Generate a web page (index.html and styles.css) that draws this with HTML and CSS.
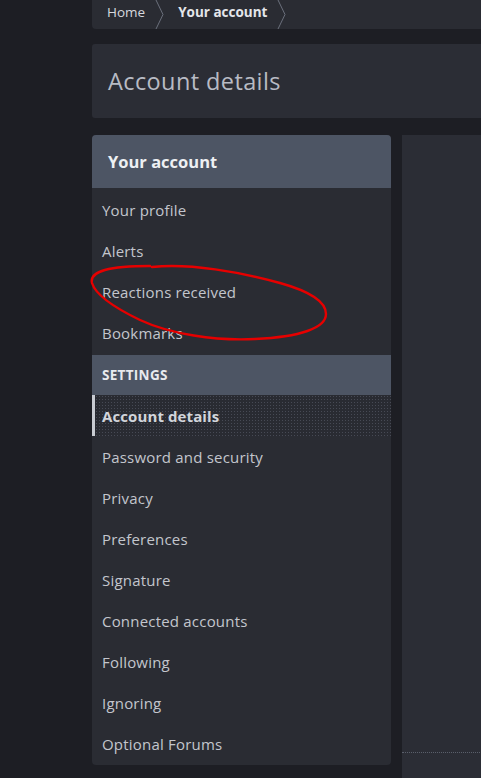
FILE: index.html
```html
<!DOCTYPE html>
<html lang="en">
<head>
<meta charset="utf-8">
<title>Account details</title>
<link rel="stylesheet" href="styles.css">
</head>
<body>
<div class="page">
  <nav class="crumbs">
    <a class="crumb">Home</a>
    <svg class="sep" width="10" height="29" viewBox="0 0 10 29"><path d="M1 0 L8 14.5 L1 29" fill="none" stroke="#6b707c" stroke-width="1"/></svg>
    <a class="crumb current">Your account</a>
    <svg class="sep" width="10" height="29" viewBox="0 0 10 29"><path d="M1 0 L8 14.5 L1 29" fill="none" stroke="#6b707c" stroke-width="1"/></svg>
  </nav>
  <header class="title-block">
    <h1>Account details</h1>
  </header>
  <div class="columns">
    <aside class="sidebar">
      <h2 class="side-head">Your account</h2>
      <ul class="side-list first">
        <li>Your profile</li>
        <li>Alerts</li>
        <li>Reactions received</li>
        <li>Bookmarks</li>
      </ul>
      <h3 class="side-sub">Settings</h3>
      <ul class="side-list">
        <li class="active">Account details</li>
        <li>Password and security</li>
        <li>Privacy</li>
        <li>Preferences</li>
        <li>Signature</li>
        <li>Connected accounts</li>
        <li>Following</li>
        <li>Ignoring</li>
        <li>Optional Forums</li>
      </ul>
    </aside>
    <main class="main">
      <div class="main-body"></div>
      <div class="main-foot"></div>
    </main>
  </div>
</div>
<svg class="scribble" width="481" height="778" viewBox="0 0 481 778">
  <path d="M152 267 C 190 263, 240 272, 280 283 C 305 290, 326 300, 326 314 C 326 328, 300 337, 255 339 C 215 341, 170 334, 140 320 C 115 308, 96 296, 92 283 C 89 271, 110 266, 150 266"
        fill="none" stroke="#e60000" stroke-width="2.4" stroke-linecap="round"/>
</svg>
</body>
</html>
```
FILE: styles.css
```css
* { box-sizing: border-box; }
html, body { margin: 0; padding: 0; }
body {
  background: #1d1e24;
  font-family: "Open Sans", "DejaVu Sans", sans-serif;
  color: #c3c6cd;
  width: 481px;
  height: 778px;
  overflow: hidden;
  position: relative;
}
.page {
  margin-left: 92px;
  width: 520px;
}
.crumbs {
  height: 29px;
  background: #2a2c33;
  border-radius: 0 0 4px 4px;
  display: flex;
  align-items: center;
  padding-left: 15px;
}
.crumb {
  font-size: 13.5px;
  color: #d6d8de;
  padding-bottom: 5px;
}
.crumb.current {
  font-weight: 700;
  color: #e4e6ea;
}
.sep { margin: 0 13px 0 10px; }
.title-block {
  margin-top: 15px;
  height: 74px;
  background: #2b2d35;
  border-radius: 3px;
  display: flex;
  align-items: center;
  padding-left: 16px;
}
.title-block h1 {
  margin: 0;
  font-size: 23.5px;
  font-weight: 400;
  color: #b8bbc4;
  letter-spacing: 0.4px;
  padding-bottom: 1px;
}
.columns {
  margin-top: 17px;
  display: flex;
  gap: 11px;
  align-items: flex-start;
}
.sidebar {
  width: 299px;
  flex: none;
  background: #2a2c33;
  border-radius: 4px;
  overflow: hidden;
  padding-bottom: 1px;
}
.side-head {
  margin: 0;
  height: 53px;
  background: #4d5564;
  display: flex;
  align-items: center;
  padding-left: 16px;
  font-size: 16.5px;
  font-weight: 700;
  color: #eef0f3;
}
.side-sub {
  margin: 0;
  height: 40px;
  background: #4d5564;
  display: flex;
  align-items: center;
  padding-left: 10px;
  font-size: 13.5px;
  font-weight: 700;
  letter-spacing: 0.3px;
  text-transform: uppercase;
  color: #e8eaee;
  padding-bottom: 1px;
}
.side-list {
  list-style: none;
  margin: 0;
  padding: 0;
}
.side-list.first { padding-top: 1px; padding-bottom: 2px; }
.side-list li {
  height: 41px;
  display: flex;
  align-items: center;
  padding-left: 10px;
  font-size: 15px;
  letter-spacing: 0.2px;
  color: #c3c6cd;
}
.side-list li.active {
  font-weight: 700;
  letter-spacing: 0.1px;
  color: #d2d5db;
  border-left: 3px solid #c9ccd3;
  padding-left: 7px;
  background-color: #292b32;
  background-image: radial-gradient(circle, #474a55 0.7px, transparent 0.9px);
  background-size: 3px 3px;
}
.main {
  flex: 1;
  display: flex;
  flex-direction: column;
}
.main-body {
  height: 618px;
  background: #2b2d35;
  border-bottom: 1px dotted #5a5f6b;
}
.main-foot {
  height: 40px;
  background: #2b2d35;
}
.scribble {
  position: absolute;
  left: 0;
  top: 0;
  pointer-events: none;
}
```
